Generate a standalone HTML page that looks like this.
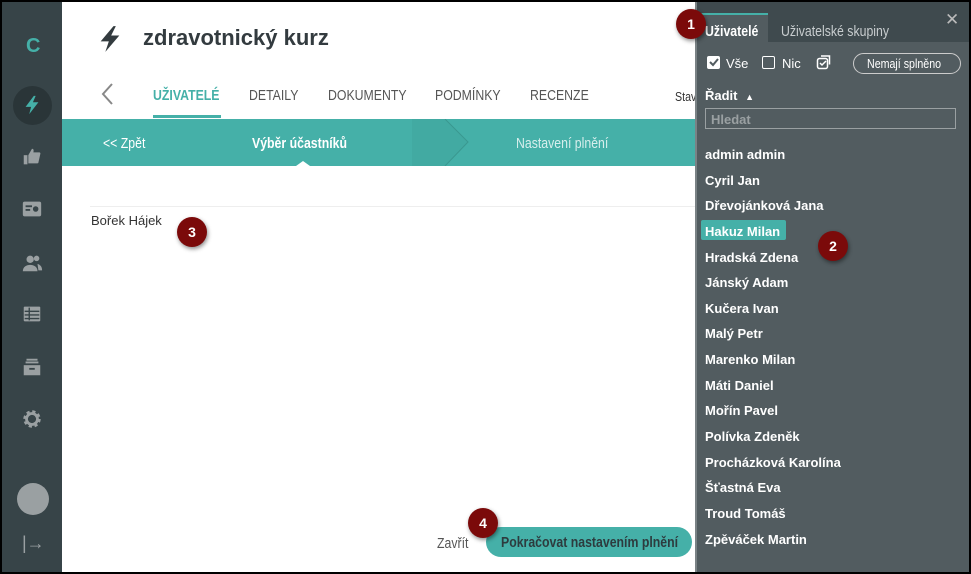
<!DOCTYPE html>
<html><head><meta charset="utf-8"><style>
*{margin:0;padding:0;box-sizing:border-box}
body{width:971px;height:574px;overflow:hidden;background:#000;font-family:"Liberation Sans",sans-serif;position:relative}
.frame{position:absolute;left:2px;top:2px;width:967px;height:570px;background:#fff;overflow:hidden}
.side{position:absolute;left:0;top:0;width:60px;height:570px;background:#374448}
.n{white-space:nowrap;transform:scaleX(.82);transform-origin:0 0}
.ic{position:absolute;left:19px;width:22px;height:22px}
.badge{position:absolute;width:30px;height:30px;border-radius:50%;background:#7b0a0a;color:#fff;font-weight:bold;font-size:14px;text-align:center;line-height:30px;box-shadow:1px 2px 4px rgba(0,0,0,.45)}
.tab{position:absolute;top:85px;font-size:15px;color:#555}
.panel{position:absolute;left:693px;top:0;width:274px;height:570px;background:#525c60;border-left:2px solid #7a8285}
.item{position:absolute;left:8px;color:#fff;font-weight:bold;font-size:13px}
</style></head><body>
<div class="frame">
<div class="side">
 <div style="position:absolute;left:24px;top:33px;color:#45b0a8;font-weight:bold;font-size:20px">C</div>
 <div style="position:absolute;left:11px;top:84px;width:39px;height:39px;border-radius:50%;background:#2a3538"></div>
 <svg class="ic" style="top:92px" viewBox="0 0 24 24"><path d="M14 2L5 14h6l-2 8 10-13h-6l3-7z" fill="#45b0a8"/></svg>
 <svg class="ic" style="top:144px" viewBox="0 0 24 24"><rect x="3" y="10" width="4" height="10" fill="#9aa0a2"/><path d="M8 10l4-7c2 0 2 2 1.5 4H20c1 0 1.5 1 1 2l-2 9c0 1-1 1-2 1H8z" fill="#9aa0a2"/></svg>
 <svg class="ic" style="top:196px" viewBox="0 0 24 24"><rect x="2" y="4" width="20" height="16" rx="2" fill="#9aa0a2"/><rect x="5" y="8" width="7" height="2" fill="#374448"/><rect x="5" y="12" width="5" height="2" fill="#374448"/><circle cx="16" cy="12" r="3" fill="#374448"/></svg>
 <svg class="ic" style="top:250px" viewBox="0 0 24 24"><circle cx="10" cy="8" r="4" fill="#9aa0a2"/><path d="M2 21c0-5 4-7 8-7s8 2 8 7z" fill="#9aa0a2"/><circle cx="17" cy="7" r="3" fill="#9aa0a2"/><path d="M18 13c3 1 5 3 5 7h-4z" fill="#9aa0a2"/></svg>
 <svg class="ic" style="top:301px" viewBox="0 0 24 24"><rect x="3" y="4" width="18" height="16" rx="1" fill="#9aa0a2"/><path d="M4 9h16M4 13h16M4 17h16M9 5v14" stroke="#374448" stroke-width="1.5"/></svg>
 <svg class="ic" style="top:354px" viewBox="0 0 24 24"><path d="M6 3h12v2H6zM5 6h14v2H5z" fill="#9aa0a2"/><rect x="3" y="10" width="18" height="11" fill="#9aa0a2"/><rect x="9" y="13" width="6" height="2" fill="#374448"/></svg>
 <svg class="ic" style="top:406px" viewBox="0 0 24 24"><circle cx="12" cy="12" r="7" fill="none" stroke="#9aa0a2" stroke-width="5" stroke-dasharray="3 2.5"/><circle cx="12" cy="12" r="6" fill="none" stroke="#9aa0a2" stroke-width="3"/></svg>
 <div style="position:absolute;left:15px;top:481px;width:32px;height:32px;border-radius:50%;background:#9aa0a2"></div>
 <div style="position:absolute;left:20px;top:531px;color:#9aa0a2;font-size:18px">|→</div>
</div>
<svg style="position:absolute;left:94px;top:22px" width="28" height="30" viewBox="0 0 24 24"><path d="M15 1L4 14h7l-3 9 12-14h-7l4-8z" fill="#333b3f"/></svg>
<div style="position:absolute;left:141px;top:23px;font-size:22px;font-weight:bold;color:#333b3f">zdravotnický kurz</div>
<svg style="position:absolute;left:98px;top:80px" width="14" height="24" viewBox="0 0 14 24"><path d="M12 2L3 12l9 10" stroke="#888" stroke-width="2" fill="none"/></svg>
<div class="tab n" style="left:151px;color:#45b0a8;font-weight:bold">UŽIVATELÉ</div>
<div style="position:absolute;left:151px;top:113px;width:68px;height:3px;background:#45b0a8"></div>
<div class="tab n" style="left:247px">DETAILY</div>
<div class="tab n" style="left:326px">DOKUMENTY</div>
<div class="tab n" style="left:433px">PODMÍNKY</div>
<div class="tab n" style="left:528px">RECENZE</div>
<div class="n" style="position:absolute;left:673px;top:87px;font-size:13px;color:#333">Stav</div>
<div style="position:absolute;left:60px;top:117px;width:633px;height:47px;background:#45b0a8"></div>
<svg style="position:absolute;left:410px;top:117px" width="60" height="47"><path d="M0 0h33l23 23-23 24H0" fill="#42aaa2"/><path d="M33 0l23 23-23 24" stroke="#3a9890" fill="none"/></svg>
<div class="n" style="position:absolute;left:101px;top:133px;color:#fff;font-size:15px">&lt;&lt; Zpět</div>
<div class="n" style="position:absolute;left:250px;top:133px;color:#fff;font-size:15px;font-weight:bold">Výběr účastníků</div>
<svg style="position:absolute;left:294px;top:158px" width="14" height="6"><path d="M0 6l7-5 7 5z" fill="#fff"/></svg>
<div class="n" style="position:absolute;left:514px;top:133px;color:#d6eeec;font-size:15px">Nastavení plnění</div>
<div style="position:absolute;left:88px;top:204px;width:605px;height:1px;background:#eee"></div>
<div style="position:absolute;left:89px;top:211px;font-size:13px;color:#333">Bořek Hájek</div>
<div class="badge" style="left:175px;top:215px">3</div>
<div class="n" style="position:absolute;left:435px;top:533px;font-size:15px;color:#555">Zavřít</div>
<div style="position:absolute;left:484px;top:525px;width:206px;height:30px;border-radius:15px;background:#45b0a8"></div>
<div class="n" style="position:absolute;left:499px;top:532px;color:#2d3b3e;font-weight:bold;font-size:15px">Pokračovat nastavením plnění</div>
<div class="badge" style="left:466px;top:506px">4</div>
<div class="panel">
 <div style="position:absolute;left:0;top:0;width:272px;height:40px;background:#3f4a4e"></div>
 <div style="position:absolute;left:0;top:11px;width:71px;height:29px;background:#525c60;border-top:2px solid #45b0a8"></div>
 <div class="n" style="position:absolute;left:8px;top:21px;color:#fff;font-weight:bold;font-size:15px">Uživatelé</div>
 <div class="n" style="position:absolute;left:84px;top:21px;color:#c8cdcf;font-size:15px">Uživatelské skupiny</div>
 <div style="position:absolute;left:248px;top:8px;color:#bbb;font-size:17px">✕</div>
 <div style="position:absolute;left:10px;top:54px;width:13px;height:13px;background:#fff;border-radius:2px"></div>
 <svg style="position:absolute;left:11px;top:55px" width="11" height="11"><path d="M2 5l3 3 5-6" stroke="#525c60" stroke-width="2" fill="none"/></svg>
 <div style="position:absolute;left:29px;top:54px;color:#fff;font-size:13px">Vše</div>
 <div style="position:absolute;left:65px;top:54px;width:13px;height:13px;border:1.5px solid #fff;border-radius:2px"></div>
 <div style="position:absolute;left:85px;top:54px;color:#fff;font-size:13px">Nic</div>
 <svg style="position:absolute;left:119px;top:52px" width="16" height="16"><rect x="1.5" y="4.5" width="10" height="10" rx="2" stroke="#fff" fill="none" stroke-width="1.5"/><path d="M5 2h8.5v8.5" stroke="#fff" fill="none" stroke-width="1.5"/><path d="M4 9l2 2 4-4" stroke="#fff" fill="none" stroke-width="1.5"/></svg>
 <div style="position:absolute;left:156px;top:51px;width:108px;height:21px;border:1px solid #ccc;border-radius:11px"></div>
 <div class="n" style="position:absolute;left:170px;top:54px;color:#fff;font-size:13px">Nemají splněno</div>
 <div style="position:absolute;left:8px;top:86px;color:#fff;font-weight:bold;font-size:13px">Řadit <span style="font-size:9px;margin-left:4px">▲</span></div>
 <div style="position:absolute;left:8px;top:106px;width:251px;height:21px;border:1.5px solid #9aa0a2"></div>
 <div style="position:absolute;left:14px;top:110px;color:#9aa0a2;font-weight:bold;font-size:13px">Hledat</div>
 <div class="item" style="top:145px">admin admin</div>
 <div class="item" style="top:171px">Cyril Jan</div>
 <div class="item" style="top:196px">Dřevojánková Jana</div>
 <div style="position:absolute;left:4px;top:218px;width:85px;height:20px;background:#45b0a8;border-radius:2px"></div>
 <div class="item" style="top:222px">Hakuz Milan</div>
 <div class="item" style="top:248px">Hradská Zdena</div>
 <div class="item" style="top:273px">Jánský Adam</div>
 <div class="item" style="top:299px">Kučera Ivan</div>
 <div class="item" style="top:324px">Malý Petr</div>
 <div class="item" style="top:350px">Marenko Milan</div>
 <div class="item" style="top:376px">Máti Daniel</div>
 <div class="item" style="top:401px">Mořín Pavel</div>
 <div class="item" style="top:427px">Polívka Zdeněk</div>
 <div class="item" style="top:453px">Procházková Karolína</div>
 <div class="item" style="top:478px">Šťastná Eva</div>
 <div class="item" style="top:504px">Troud Tomáš</div>
 <div class="item" style="top:530px">Zpěváček Martin</div>
 <div class="badge" style="left:121px;top:229px">2</div>
</div>
<div class="badge" style="left:674px;top:7px">1</div>
</div>
</body></html>
